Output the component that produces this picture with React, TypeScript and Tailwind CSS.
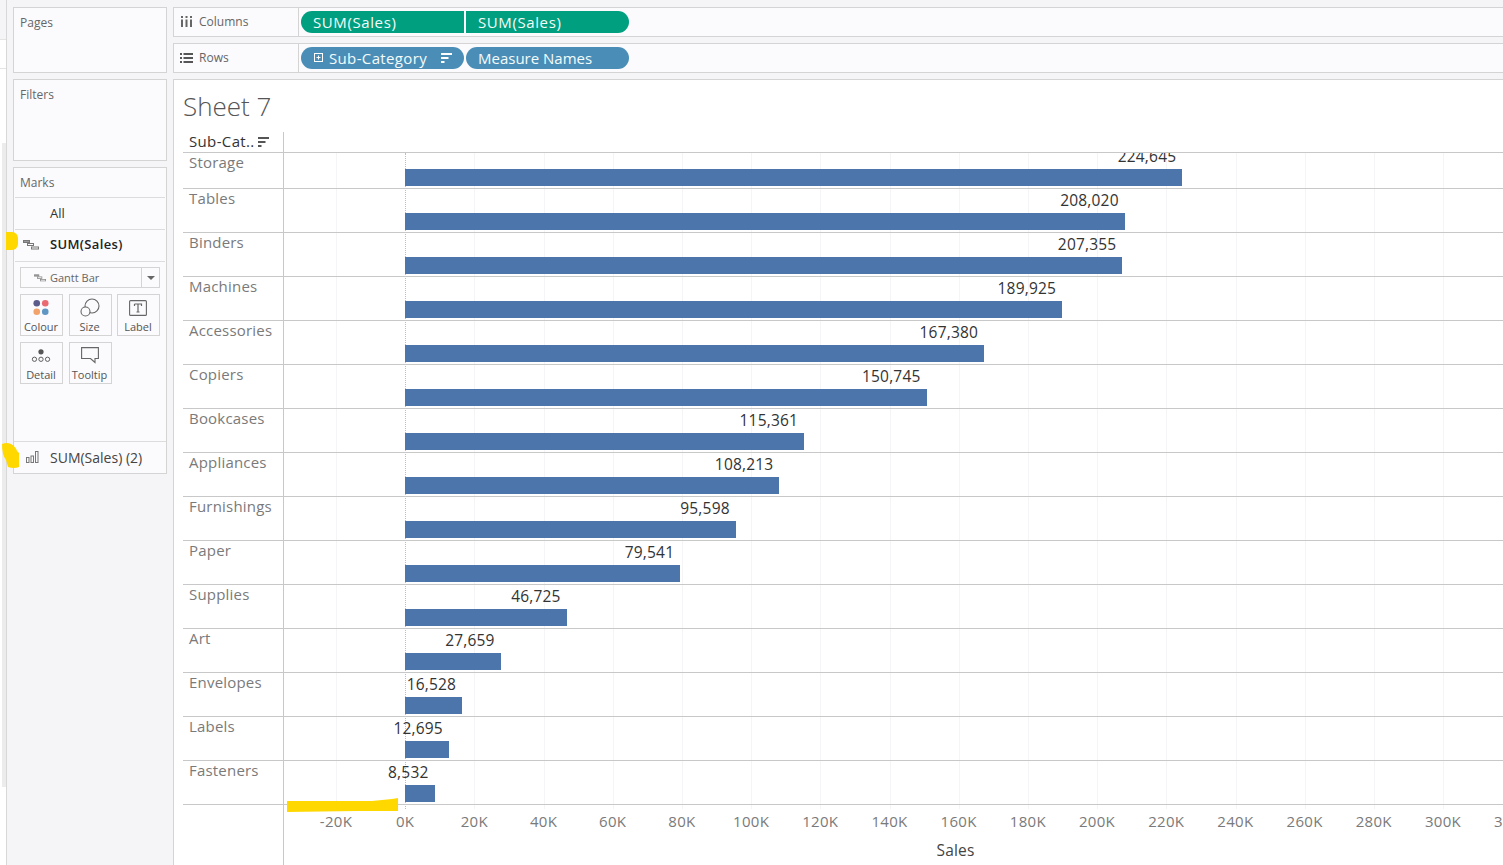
const F = "font-['Open_Sans','Noto_Sans',sans-serif]";

const rows: [string, number, string][] = [
  ["Storage", 224645, "224,645"],
  ["Tables", 208020, "208,020"],
  ["Binders", 207355, "207,355"],
  ["Machines", 189925, "189,925"],
  ["Accessories", 167380, "167,380"],
  ["Copiers", 150745, "150,745"],
  ["Bookcases", 115361, "115,361"],
  ["Appliances", 108213, "108,213"],
  ["Furnishings", 95598, "95,598"],
  ["Paper", 79541, "79,541"],
  ["Supplies", 46725, "46,725"],
  ["Art", 27659, "27,659"],
  ["Envelopes", 16528, "16,528"],
  ["Labels", 12695, "12,695"],
  ["Fasteners", 8532, "8,532"],
];

const ticks = ["-20K", "0K", "20K", "40K", "60K", "80K", "100K", "120K", "140K", "160K", "180K", "200K", "220K", "240K", "260K", "280K", "300K", "320K"];
const PX = 69.2 / 20000;

function SortIcon({ color = "#555" }: { color?: string }) {
  return (
    <svg width="11" height="10" viewBox="0 0 11 10" fill={color}>
      <rect x="0" y="0" width="11" height="2" />
      <rect x="0" y="4" width="7.5" height="2" />
      <rect x="0" y="8" width="3.5" height="2" />
    </svg>
  );
}

function GanttIcon({ c = "#777" }: { c?: string }) {
  return (
    <svg width="16" height="10" viewBox="0 0 16 10" fill="none" stroke={c} strokeWidth="1">
      <rect x="0.5" y="0.5" width="6" height="2" fill="#999" />
      <rect x="4.5" y="3.5" width="6" height="2" />
      <rect x="8.5" y="7" width="7" height="2" />
    </svg>
  );
}

function Panel({ title, cls }: { title: string; cls: string }) {
  return (
    <div className={`${cls} box-border border border-[#d4d4d4] bg-[#fbfafc] px-[6px] text-[12px] leading-[16px] text-[#666]`}>
      {title}
    </div>
  );
}

function MarkButton({ label, children }: { label: string; children: React.ReactNode }) {
  return (
    <div className="flex h-[42px] w-[43px] flex-col items-center border border-[#d4d4d4] bg-[#fbfafc] pr-[1px]">
      <div className="flex h-[24px] items-center justify-center pt-[1px]">{children}</div>
      <div className="whitespace-nowrap text-[11px] leading-[15px] text-[#555]">{label}</div>
    </div>
  );
}

function Pill({ text, cls, children }: { text: string; cls: string; children?: React.ReactNode }) {
  return (
    <div className={`flex h-[22px] items-center whitespace-nowrap text-[15px] text-[#f4fbfa] ${cls}`}>
      {children}
      {text}
    </div>
  );
}

export default function App() {
  return (
    <div className={`${F} relative flex h-[865px] w-[1503px] overflow-hidden bg-[#f5f4f7]`}>
      {/* left sliver */}
      <div className="flex h-full w-[7px] flex-col border-r border-[#d8d8d8] bg-white">
        <div className="h-[40px] border-b border-[#e4e4e4] bg-[#f5f4f7]" />
        <div className="h-[29px] border-b border-[#e4e4e4]" />
        <div className="h-[74px]" />
        <div className="ml-[2px] h-[644px] bg-[#ececec]" />
      </div>

      {/* side cards */}
      <div className="ml-[6px] flex w-[154px] flex-col gap-[6px] pt-[7px]">
        <Panel title="Pages" cls="h-[66px] pt-[7px]" />
        <Panel title="Filters" cls="h-[82px] pt-[7px]" />
        <div className="box-border flex h-[307px] flex-col border border-[#d4d4d4] bg-[#fbfafc] text-[13px] text-[#333]">
          <div className="mx-[1px] h-[30px] border-b border-[#dcdcdc] pl-[5px] pt-[7px] text-[12px] leading-[16px] text-[#666]">Marks</div>
          <div className="mx-[1px] flex h-[32px] items-center border-b border-[#dcdcdc] pl-[35px]">All</div>
          <div className="mx-[1px] flex h-[32px] items-center border-b border-[#dcdcdc] pb-[2px] pl-[8px] font-semibold tracking-[0.35px] text-[#222]">
            <span className="mr-[11px] flex w-[16px]"><GanttIcon /></span>SUM(Sales)
          </div>
          <div className="px-[6px] pt-[5px]">
            <div className="flex h-[21px] w-[140px] items-center border border-[#d4d4d4] bg-[#fbfafc]">
              <div className="flex flex-1 items-center pl-[11px] pt-[1px] text-[11px] text-[#666]">
                <span className="mr-[5px] flex scale-75"><GanttIcon c="#888" /></span>
                <span className="-ml-[3px]">Gantt Bar</span>
              </div>
              <div className="flex h-full w-[18px] items-center justify-center border-l border-[#d4d4d4]">
                <div className="h-0 w-0 border-x-[4px] border-t-[4px] border-x-transparent border-t-[#666]" />
              </div>
            </div>
            <div className="mt-[6px] grid w-[140px] grid-cols-[43px_43px_43px] justify-between gap-y-[6px]">
              <MarkButton label="Colour">
                <svg width="18" height="17" viewBox="0 0 18 18">
                  <circle cx="4.5" cy="4.5" r="3.5" fill="#5b5b8c" />
                  <circle cx="13.5" cy="4.5" r="3.5" fill="#ea6a72" />
                  <circle cx="4.5" cy="13.5" r="3.5" fill="#f2a26b" />
                  <circle cx="13.5" cy="13.5" r="3.5" fill="#5f96c4" />
                </svg>
              </MarkButton>
              <MarkButton label="Size">
                <svg width="20" height="20" viewBox="0 0 20 20" fill="none" stroke="#666" strokeWidth="1.1">
                  <circle cx="12" cy="8" r="7" />
                  <circle cx="5.5" cy="13.5" r="4.5" fill="#fbfafc" />
                </svg>
              </MarkButton>
              <MarkButton label="Label">
                <svg width="18" height="16" viewBox="0 0 18 16" fill="none">
                  <rect x="0.6" y="0.6" width="16.8" height="14.8" rx="1" stroke="#666" strokeWidth="1.1" />
                  <path d="M5.5 4h7v2M9 4v8M7.5 12h3M5.5 4v2" stroke="#666" strokeWidth="1.2" />
                </svg>
              </MarkButton>
              <MarkButton label="Detail">
                <svg width="20" height="14" viewBox="0 0 20 15" fill="none">
                  <circle cx="10" cy="3" r="2.8" fill="#555" />
                  <circle cx="3" cy="11" r="2.3" stroke="#555" />
                  <circle cx="10" cy="11" r="2.3" stroke="#555" />
                  <circle cx="17" cy="11" r="2.3" stroke="#555" />
                </svg>
              </MarkButton>
              <MarkButton label="Tooltip">
                <svg width="18" height="17" viewBox="0 0 18 17" fill="none">
                  <path d="M0.6 0.6H17.4V11.5H14V15.5L9.5 11.5H0.6Z" stroke="#666" strokeWidth="1.1" />
                </svg>
              </MarkButton>
            </div>
          </div>
          <div className="flex-1" />
          <div className="flex h-[32px] items-center border-t border-[#dcdcdc] pb-[1px] pl-[12px] text-[14px] text-[#444]">
            <svg width="13" height="12" viewBox="0 0 13 12" fill="none" stroke="#777" className="mr-[11px]">
              <rect x="0.5" y="6.5" width="2.5" height="5" />
              <rect x="5" y="5" width="2.5" height="6.5" />
              <rect x="9.5" y="0.5" width="2.5" height="11" />
            </svg>
            SUM(Sales) (2)
          </div>
        </div>
      </div>

      {/* main */}
      <div className="ml-[6px] flex min-w-0 flex-1 flex-col gap-[6px] pt-[7px]">
        <div className="box-border flex h-[30px] border border-r-0 border-[#d4d4d4] bg-[#fbfafc]">
          <div className="flex w-[125px] items-center border-r border-[#d4d4d4] pb-[1px] pl-[7px] text-[12px] text-[#666]">
            <svg width="12" height="11" viewBox="0 0 12 11" fill="#666" className="mr-[6px]">
              <rect x="0" y="0" width="2" height="2" />
              <rect x="0" y="3.5" width="2" height="7.5" />
              <rect x="4.5" y="0" width="2" height="2" />
              <rect x="4.5" y="3.5" width="2" height="7.5" />
              <rect x="9" y="0" width="2" height="2" />
              <rect x="9" y="3.5" width="2" height="7.5" />
            </svg>
            Columns
          </div>
          <div className="ml-[2px] flex items-center gap-[2px]">
            <Pill text="SUM(Sales)" cls="w-[163px] rounded-l-[11px] bg-[#009f80] pl-[12px] tracking-[0.6px]" />
            <Pill text="SUM(Sales)" cls="w-[163px] rounded-r-[11px] bg-[#009f80] pl-[12px] tracking-[0.6px]" />
          </div>
        </div>
        <div className="box-border flex h-[30px] border border-r-0 border-[#d4d4d4] bg-[#fbfafc]">
          <div className="flex w-[125px] items-center border-r border-[#d4d4d4] pb-[1px] pl-[6px] text-[12px] text-[#666]">
            <svg width="13" height="10" viewBox="0 0 13 10" fill="#555" className="mr-[6px]">
              <rect x="0" y="0" width="2" height="2" />
              <rect x="3.5" y="0" width="9.5" height="2" />
              <rect x="0" y="4" width="2" height="2" />
              <rect x="3.5" y="4" width="9.5" height="2" />
              <rect x="0" y="8" width="2" height="2" />
              <rect x="3.5" y="8" width="9.5" height="2" />
            </svg>
            Rows
          </div>
          <div className="ml-[2px] flex items-center gap-[2px]">
            <Pill text="Sub-Category" cls="relative w-[163px] rounded-[11px] bg-[#4a8eb8] pl-[13px] tracking-[0.35px]">
              <svg width="10" height="10" viewBox="0 0 10 10" fill="none" stroke="#fff" className="mr-[5px]">
                <rect x="0.5" y="0.5" width="8" height="8" />
                <path d="M2.5 4.5h4M4.5 2.5v4" />
              </svg>
              <span className="absolute left-[140px] top-[6px] flex"><SortIcon color="#fff" /></span>
            </Pill>
            <Pill text="Measure Names" cls="w-[163px] rounded-[11px] bg-[#4a8eb8] pl-[12px]" />
          </div>
        </div>

        {/* view */}
        <div className="box-border flex min-h-0 flex-1 flex-col border-l border-t border-[#d4d4d4] bg-white">
          <div className="h-[52px] pl-[9px] pt-[8px] text-[26px] font-light leading-[36px] text-[#555]">Sheet 7</div>
          <div className="relative ml-[9px] flex-1">
            {/* gridlines */}
            <div className="pointer-events-none absolute left-0 top-[21px] h-[656px] w-full">
              {ticks.map((t, i) => (
                <div
                  key={t}
                  className={t === "0K" ? "absolute top-0 h-full border-l border-dotted border-[#bdbdbd]" : "absolute top-0 h-full border-l border-[#f5f5f7]"}
                  style={{ left: 153 + i * 69.2 }}
                />
              ))}
            </div>
            {/* header */}
            <div className="flex h-[21px] border-b border-[#c8c8c8]">
              <div className="flex w-[101px] items-center border-r border-[#c8c8c8] pb-[2px] pl-[6px] text-[15px] tracking-[0.35px] text-[#333]">
                Sub-Cat..
                <span className="ml-[3px] mt-[2px] flex"><SortIcon /></span>
              </div>
            </div>
            {/* rows */}
            {rows.map(([name, v, lab], i) => (
              <div key={name} className={`relative box-border flex border-b border-[#c8c8c8] ${i === 0 ? "h-[36px]" : "h-[44px]"}`}>
                <div className="w-[101px] shrink-0 overflow-hidden border-r border-[#c8c8c8] pl-[6px] text-[15px] leading-[18px] tracking-[0.2px] text-[#7a7a7a]">{name}</div>
                <div className="flex min-w-0 flex-1 flex-col justify-end overflow-hidden pb-[2px] pl-[121px]">
                  <div className="flex h-[20px] shrink-0 justify-end whitespace-nowrap pr-[6px] text-[15.5px] leading-[19px] tracking-[0.2px] text-[#333]" style={{ width: v * PX }}>
                    {lab}
                  </div>
                  <div className="mt-[2px] h-[17px] shrink-0 bg-[#4c76ab]" style={{ width: v * PX }} />
                </div>
              </div>
            ))}
            {/* axis */}
            <div className="flex h-[60px]">
              <div className="w-[101px] shrink-0 border-r border-[#c8c8c8]" />
              <div className="relative flex-1">
                <div className="flex pl-[17.4px] pt-[6px]">
                  {ticks.map((t) => (
                    <div key={t} className="w-[69.2px] shrink-0 text-center text-[15px] leading-[20px] tracking-[0.3px] text-[#7a7a7a]">{t}</div>
                  ))}
                </div>
                <div className="ml-[640px] mt-[9px] w-[63px] text-center text-[15.5px] leading-[20px] tracking-[0.2px] text-[#444]">Sales</div>
              </div>
            </div>
          </div>
        </div>
      </div>

      {/* highlighter marks */}
      <div className="absolute left-[6px] top-[232px] h-[18px] w-[12px] rounded-r-[6px] bg-[#ffd800]" />
      <svg className="absolute left-[2px] top-[443px]" width="18" height="26" viewBox="0 0 18 26" fill="#ffd800">
        <path d="M0 1Q5 -1 9 1Q14 4 15 8L17 10L17 24Q12 26 6 24L4 17Q0 12 0 1Z" />
      </svg>
      <svg className="absolute left-[287px] top-[798px]" width="111" height="14" viewBox="0 0 111 14" fill="#ffd800">
        <path d="M0 3L85 3L105 1L111 0L111 13L70 13L0 14Z" />
      </svg>
    </div>
  );
}
